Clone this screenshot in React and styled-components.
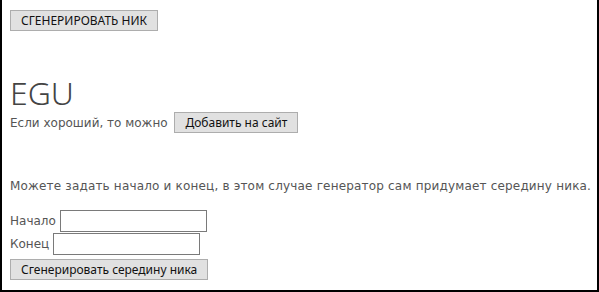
import styled, { createGlobalStyle } from "styled-components";

const Global = createGlobalStyle`
  html, body {
    margin: 0;
    padding: 0;
    background: #fff;
  }
`;

export default function App() {
  return (
    <>
      <Global />
      <Frame>
        <Button>СГЕНЕРИРОВАТЬ НИК</Button>
        <Nick>EGU</Nick>
        <Line>
          Если хороший, то можно <Button $left={3}>Добавить на сайт</Button>
        </Line>
        <Hint>
          Можете задать начало и конец, в этом случае генератор сам придумает
          середину ника.
        </Hint>
        <Field>
          Начало <Input type="text" />
        </Field>
        <Field>
          Конец <Input type="text" />
        </Field>
        <Button $top={3}>Сгенерировать середину ника</Button>
      </Frame>
    </>
  );
}

const Frame = styled.div`
  box-sizing: border-box;
  height: 292px;
  padding: 10px 8px 0 8px;
  border-left: 2px solid #000;
  border-right: 2px solid #000;
  border-bottom: 2px solid #000;
  font-family: "DejaVu Sans", Verdana, sans-serif;
  font-size: 12px;
  color: #555;
`;

const Button = styled.button`
  font-family: "Noto Sans", "Open Sans", sans-serif;
  font-size: 12px;
  color: #111;
  background: #e1e1e1;
  border: 1px solid #adadad;
  border-radius: 0;
  height: 21px;
  line-height: 19px;
  padding: 0 10px;
  margin: ${(p) => p.$top || 0}px 0 0 ${(p) => p.$left || 0}px;
`;

const Nick = styled.div`
  margin-top: 45px;
  font-family: "Noto Sans", sans-serif;
  font-weight: 300;
  font-size: 32px;
  line-height: 33px;
  color: #444;
`;

const Line = styled.div`
  margin-top: 3px;
`;

const Hint = styled.p`
  margin: 46px 0 17px;
  letter-spacing: 0.18px;
  white-space: nowrap;
`;

const Field = styled.div`
  height: 23px;
`;

const Input = styled.input`
  box-sizing: border-box;
  width: 147px;
  height: 22px;
  border: 1px solid #7a7a7a;
  margin: 0;
  vertical-align: middle;
`;
